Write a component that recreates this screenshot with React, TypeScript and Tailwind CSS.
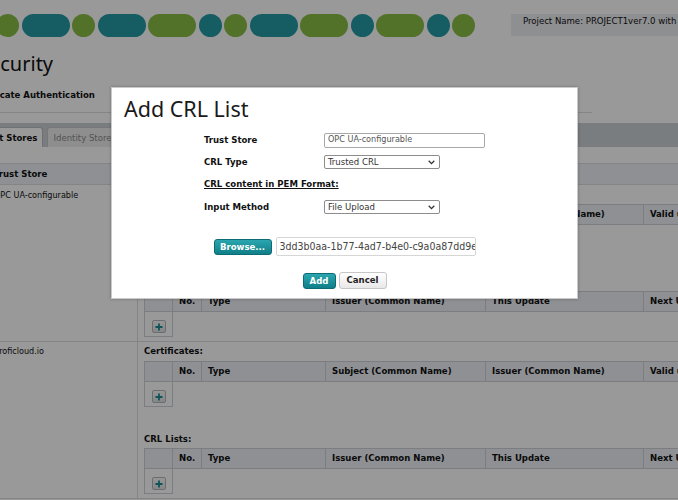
import React from "react";

const pills: { c: "g" | "t"; long: boolean }[] = [
  { c: "g", long: false },
  { c: "t", long: true },
  { c: "g", long: false },
  { c: "t", long: true },
  { c: "g", long: true },
  { c: "t", long: false },
  { c: "g", long: false },
  { c: "t", long: true },
  { c: "g", long: true },
  { c: "t", long: false },
  { c: "g", long: true },
  { c: "t", long: false },
  { c: "g", long: false },
];

const colW = ["w-[27px]", "w-[29px]", "w-[124px]", "w-[160px]", "w-[158px]", "w-[140px]"];

function PlusButton() {
  return (
    <div className="flex h-[13px] w-[14px] items-center justify-center rounded-[2px] border border-[#b3b6b9] bg-linear-to-b from-[#fafafa] to-[#dfe1e3]">
      <svg width="8" height="8" viewBox="0 0 8 8">
        <path d="M4 0.5v7M0.5 4h7" stroke="#1d8a93" strokeWidth="1.8" />
      </svg>
    </div>
  );
}

function SubTable({ cols }: { cols: string[] }) {
  return (
    <div>
      <div className="flex h-[21px] w-max border border-[#cdd1d6] bg-[#edf0f5]">
        {["", ...cols].map((c, i) => (
          <div
            key={i}
            className={`${colW[i]} shrink-0 ${i ? "border-l border-[#cdd1d6]" : ""} flex items-center px-[6px] text-[9.5px] font-bold whitespace-nowrap`}
          >
            {c}
          </div>
        ))}
      </div>
      <div className="h-[25px] w-[29px] border-x border-b border-[#cdd1d6] pt-[8px] pl-[7px]">
        <PlusButton />
      </div>
    </div>
  );
}

function StoreRow({ name, first }: { name: string; first?: boolean }) {
  return (
    <div className="flex border-b border-[#d9dcdf]">
      <div className={`w-[150px] shrink-0 border-r border-[#d9dcdf] px-[6px] ${first ? "pt-[4px]" : "pt-[3px]"} text-[9px] leading-[12px]`}>
        {name}
      </div>
      <div className="flex-1 pl-[6px] pt-[3px] pb-[4px]">
        <div className="text-[9.5px] font-bold leading-[12px]">Certificates:</div>
        <div className="mt-[4px]">
          <SubTable cols={["No.", "Type", "Subject (Common Name)", "Issuer (Common Name)", "Valid until"]} />
        </div>
        <div className="mt-[26px] text-[9.5px] font-bold leading-[12px]">CRL Lists:</div>
        <div className="mt-[3px]">
          <SubTable cols={["No.", "Type", "Issuer (Common Name)", "This Update", "Next Update"]} />
        </div>
      </div>
    </div>
  );
}

function Select({ value }: { value: string }) {
  return (
    <div className="flex h-[14px] w-[116px] items-center justify-between rounded-[2px] border border-[#8d8d8d] bg-white pl-[3px] pr-[4px] text-[9.5px] text-[#333]">
      <span>{value}</span>
      <svg width="7" height="5" viewBox="0 0 7 5">
        <path d="M0.7 0.8l2.8 2.8 2.8-2.8" fill="none" stroke="#333" strokeWidth="1.3" />
      </svg>
    </div>
  );
}

export default function App() {
  return (
    <div className="relative h-[500px] w-[678px] overflow-hidden bg-white font-['DejaVu_Sans_Condensed','DejaVu_Sans',sans-serif] font-stretch-condensed text-[#111]">
      {/* top banner */}
      <div className="flex items-start pt-[14px]">
        <div className="-ml-[4px] flex shrink-0 gap-[2.5px]">
          {pills.map((p, i) => (
            <div
              key={i}
              className={`h-[23px] rounded-full ${p.long ? "w-[48px]" : "w-[23px]"} ${p.c === "g" ? "bg-[#89bd45]" : "bg-[#259aa5]"}`}
            />
          ))}
        </div>
        <div className="ml-[36px] h-[22px] w-[220px] shrink-0 bg-[#eceef2] pl-[12px] text-[9.5px] leading-[14px] whitespace-nowrap">
          Project Name: PROJECT1ver7.0 with CRL
        </div>
      </div>

      <h1 className="-ml-[22px] mt-[14px] font-['Noto_Sans',sans-serif] text-[20px] leading-[26px]">Security</h1>

      <div className="-ml-[30px] mt-[12px] w-[622px] border-b border-[#dedede] pb-[11px] text-[9.5px] font-bold leading-[12px]">
        Certificate Authentication
      </div>

      {/* tabs */}
      <div className="-ml-[30px] mt-[10px] flex h-[24px] items-end gap-[4px] bg-[#cbd0d6] pl-[3px]">
        <div className="h-[20px] rounded-t-[3px] border border-b-0 border-[#b7bcc2] bg-white px-[5px] text-[9.5px] font-bold leading-[19px]">
          Trust Stores
        </div>
        <div className="h-[20px] rounded-t-[3px] border border-b-0 border-[#c3c7cc] bg-[#ededed] px-[5px] text-[9.5px] leading-[19px] text-[#8a8a8a]">
          Identity Stores
        </div>
      </div>

      {/* trust store table */}
      <div className="pt-[16px]">
        <div className="-ml-[12px] w-[740px] border-t border-[#d9dcdf]">
          <div className="flex h-[21px] border-b border-[#d9dcdf] bg-[#edf0f5]">
            <div className="flex w-[150px] shrink-0 items-center border-r border-[#d9dcdf] px-[6px] text-[9.5px] font-bold">
              Trust Store
            </div>
            <div className="flex-1" />
          </div>
          <StoreRow name="OPC UA-configurable" first />
          <StoreRow name="proficloud.io" />
        </div>
      </div>

      {/* overlay */}
      <div className="absolute inset-0 bg-black/40" />

      {/* dialog */}
      <div className="absolute left-[111px] top-[87px] h-[212px] w-[467px] border border-[#c9c9c9] bg-white shadow-[0_0_3px_rgba(0,0,0,0.25)]">
        <div className="pl-[12px] pt-[7px] font-['Noto_Sans',sans-serif] text-[21.5px] leading-[28px] text-[#1a1a1a]">
          Add CRL List
        </div>
        <div className="mx-auto mt-[6px] grid w-[281px] grid-cols-[120px_161px] text-[9.5px]">
          <div className="flex h-[22px] items-center font-bold">Trust Store</div>
          <div className="flex h-[22px] items-center">
            <div className="flex h-[15px] w-[161px] items-center rounded-[2px] border border-[#a8a8a8] pl-[3px] text-[9px] text-[#555]">
              OPC UA-configurable
            </div>
          </div>
          <div className="flex h-[22px] items-center font-bold">CRL Type</div>
          <div className="flex h-[22px] items-center">
            <Select value="Trusted CRL" />
          </div>
          <div className="col-span-2 flex h-[23px] items-center font-bold underline">CRL content in PEM Format:</div>
          <div className="flex h-[22px] items-center font-bold">Input Method</div>
          <div className="flex h-[22px] items-center">
            <Select value="File Upload" />
          </div>
        </div>
        <div className="mt-[19px] flex items-center justify-center gap-[4px]">
          <button className="h-[16px] w-[58px] rounded-[3px] border border-[#0b6c74] bg-linear-to-b from-[#2aa6b0] to-[#0f7f88] text-[9.5px] font-bold text-white">
            Browse...
          </button>
          <div className="flex h-[19px] w-[200px] items-center overflow-hidden rounded-[2px] border border-[#d6d6d6] pl-[3px] text-[10.5px] whitespace-nowrap text-[#444]">
            3dd3b0aa-1b77-4ad7-b4e0-c9a0a87dd9e1.crl
          </div>
        </div>
        <div className="mt-[16px] flex items-center justify-center gap-[3px]">
          <button className="h-[16px] w-[33px] rounded-[3px] border border-[#0b6c74] bg-linear-to-b from-[#2aa6b0] to-[#0f7f88] text-[9.5px] font-bold text-white">
            Add
          </button>
          <button className="h-[17px] w-[48px] rounded-[3px] border border-[#c6c6c6] bg-linear-to-b from-white to-[#e8e8e8] text-[9.5px] font-bold text-[#222]">
            Cancel
          </button>
        </div>
      </div>
    </div>
  );
}
